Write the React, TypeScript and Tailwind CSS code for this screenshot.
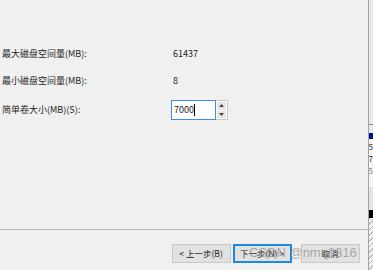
import React from 'react';

const font = { fontFamily: '"Noto Sans CJK SC", "Microsoft YaHei", sans-serif' };

const Row = ({ label, children, className = '' }: { label: string; children: React.ReactNode; className?: string }) => (
  <div className={`flex items-center h-[20px] ${className}`}>
    <div className="w-[171px] pl-[2px] text-[9px] text-[#1e1e1e]">{label}</div>
    {children}
  </div>
);

const Button = ({ children, primary = false }: { children: React.ReactNode; primary?: boolean }) => (
  <button
    className={`w-[59px] h-[19px] flex items-center justify-center text-[8.5px] text-[#1a1a1a] bg-[#e1e1e1] ${
      primary ? 'border-2 border-[#1e88e5]' : 'border border-[#c8c8c8]'
    }`}
  >
    {children}
  </button>
);

const App = () => {
  return (
    <div className="w-[373px] h-[270px] flex bg-[#f0f0f0] overflow-hidden relative" style={font}>
      {/* dialog */}
      <div className="w-[369px] h-full flex flex-col border-r border-[#a3a3a3]">
        <div className="h-[229px] pt-[44px] flex flex-col gap-[7px]">
          <Row label="最大磁盘空间量(MB):">
            <span className="pl-[2px] text-[9px] text-[#1e1e1e]">61437</span>
          </Row>
          <Row label="最小磁盘空间量(MB):">
            <span className="pl-[2px] text-[9px] text-[#1e1e1e]">8</span>
          </Row>
          <Row label="简单卷大小(MB)(S):" className="mt-[2px]">
            <div className="flex">
              <div className="w-[45px] h-[20px] bg-white border border-[#3d8ee0] flex items-center pl-[2px] text-[9px] text-[#1e1e1e]">
                7000
                <span className="w-px h-[12px] bg-black" />
              </div>
              <div className="w-[12px] h-[20px] flex flex-col border border-l-0 border-[#c9c9c9] bg-white p-px gap-px">
                <div className="flex-1 bg-[#e6e6e6] flex items-center justify-center">
                  <svg width="5" height="3" viewBox="0 0 5 3"><path d="M2.5 0L5 3H0z" fill="#444" /></svg>
                </div>
                <div className="flex-1 bg-[#e6e6e6] flex items-center justify-center">
                  <svg width="5" height="3" viewBox="0 0 5 3"><path d="M0 0h5L2.5 3z" fill="#444" /></svg>
                </div>
              </div>
            </div>
          </Row>
        </div>
        <div className="h-px bg-[#b4b4b4]" />
        <div className="flex-1 flex items-start justify-end pt-[14px] pr-[8px]">
          <div className="flex">
            <Button>&lt; 上一步(B)</Button>
            <div className="ml-[2px]">
              <Button primary>下一步(N) &gt;</Button>
            </div>
            <div className="ml-[9px]">
              <Button>取消</Button>
            </div>
          </div>
        </div>
      </div>

      {/* window behind */}
      <div className="flex-1 h-full flex flex-col bg-[#e9e9e9]">
        <div className="h-[124px]" />
        <div className="h-px bg-[#8a8a8a]" />
        <div className="h-[8px]" />
        <div className="h-[6px] bg-[#0a0a8c]" />
        <div className="h-[48px] bg-[#f4f4f4] flex flex-col text-[8px] leading-[12px] text-[#333] pt-[2px]">
          <span>5</span>
          <span>7</span>
          <span className="text-[#888]">5</span>
        </div>
        <div className="h-[23px] bg-[#e4e4e4]" />
        <div className="h-[8px] bg-black" />
        <div className="flex-1 bg-[repeating-linear-gradient(135deg,#bdbdbd_0px,#bdbdbd_1px,#f2f2f2_1px,#f2f2f2_4px)]" />
      </div>

      {/* watermark */}
      <div
        className="absolute left-[249px] top-[245px] text-[13px] leading-[16px] text-[#8c8c8c]/70 whitespace-nowrap pointer-events-none"
        style={{ fontFamily: '"Liberation Sans", Arial, sans-serif' }}
      >
        CSDN @nmq0316
      </div>
    </div>
  );
};

export default App;
